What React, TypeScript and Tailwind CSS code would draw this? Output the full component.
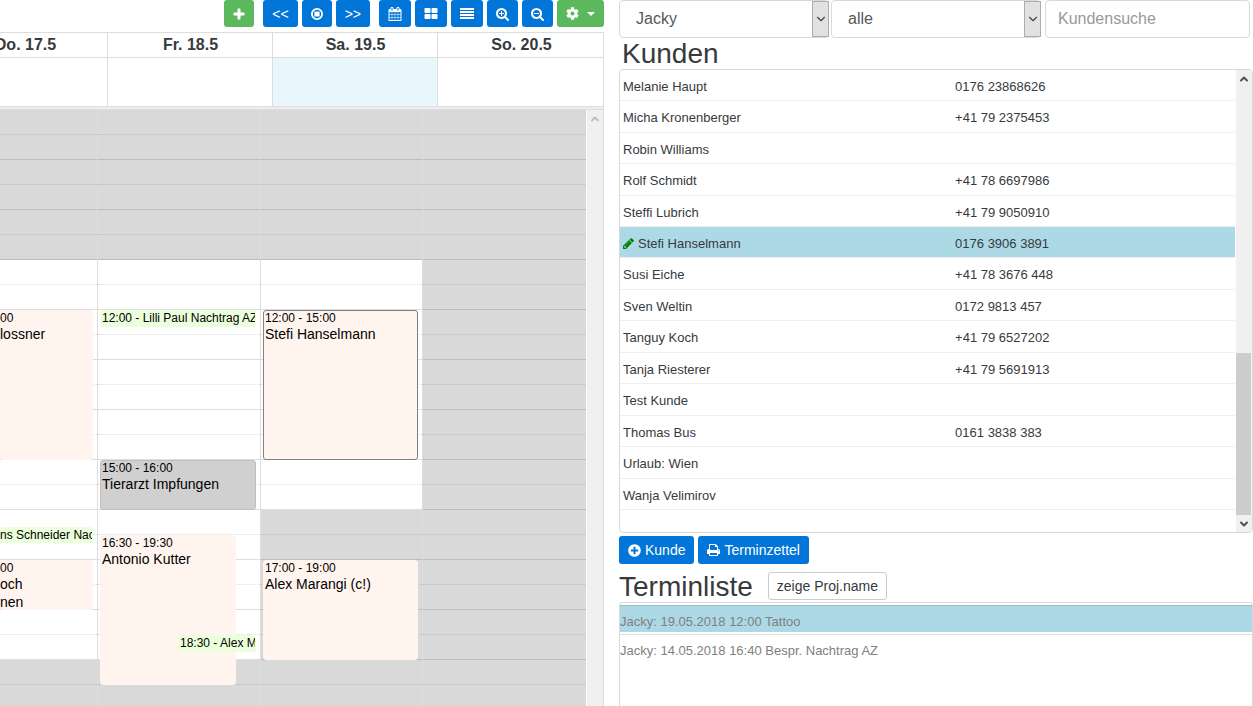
import clsx from "clsx";
import { ChevronDown, ChevronUp } from "lucide-react";
import type { ReactNode } from "react";
import { FaCog, FaPlusCircle } from "react-icons/fa";

type CalendarEvent = {
  start: string;
  end: string;
  time?: string;
  title: string;
  kind: "session" | "note" | "blocked" | "selected";
  place?: string;
};

type Day = {
  label: string;
  today?: boolean;
  // opening hours as half-hour slot indexes, counted from 08:00
  open: [number, number] | null;
  cut?: boolean;
  events: CalendarEvent[];
};

const SLOT_COUNT = 24;
const SLOT_HEIGHT = 25;
const FIRST_HOUR = 8;

const DAYS: Day[] = [
  {
    label: "Do. 17.5",
    open: [6, 22],
    cut: true,
    events: [
      { start: "12:00", end: "15:00", time: "00", title: "lossner", kind: "session" },
      { start: "16:20", end: "16:40", title: "ns Schneider Nachtrag", kind: "note" },
      { start: "17:00", end: "18:00", time: "00", title: "och nen", kind: "session" },
    ],
  },
  {
    label: "Fr. 18.5",
    open: [6, 22],
    events: [
      { start: "12:00", end: "12:20", title: "12:00 - Lilli Paul Nachtrag AZ", kind: "note" },
      { start: "15:00", end: "16:00", time: "15:00 - 16:00", title: "Tierarzt Impfungen", kind: "blocked" },
      {
        start: "16:30",
        end: "19:30",
        time: "16:30 - 19:30",
        title: "Antonio Kutter",
        kind: "session",
        place: "left-0 right-[13%]",
      },
      {
        start: "18:30",
        end: "18:50",
        title: "18:30 - Alex Marangi",
        kind: "note",
        place: "left-1/2 right-0",
      },
    ],
  },
  {
    label: "Sa. 19.5",
    today: true,
    open: [6, 16],
    events: [
      { start: "12:00", end: "15:00", time: "12:00 - 15:00", title: "Stefi Hanselmann", kind: "selected" },
      { start: "17:00", end: "19:00", time: "17:00 - 19:00", title: "Alex Marangi (c!)", kind: "session" },
    ],
  },
  { label: "So. 20.5", open: null, events: [] },
];

const CUSTOMERS = [
  { name: "Melanie Haupt", phone: "0176 23868626" },
  { name: "Micha Kronenberger", phone: "+41 79 2375453" },
  { name: "Robin Williams", phone: "" },
  { name: "Rolf Schmidt", phone: "+41 78 6697986" },
  { name: "Steffi Lubrich", phone: "+41 79 9050910" },
  { name: "Stefi Hanselmann", phone: "0176 3906 3891", selected: true },
  { name: "Susi Eiche", phone: "+41 78 3676 448" },
  { name: "Sven Weltin", phone: "0172 9813 457" },
  { name: "Tanguy Koch", phone: "+41 79 6527202" },
  { name: "Tanja Riesterer", phone: "+41 79 5691913" },
  { name: "Test Kunde", phone: "" },
  { name: "Thomas Bus", phone: "0161 3838 383" },
  { name: "Urlaub: Wien", phone: "" },
  { name: "Wanja Velimirov", phone: "" },
];

const APPOINTMENTS = [
  { text: "Jacky: 19.05.2018 12:00 Tattoo", selected: true },
  { text: "Jacky: 14.05.2018 16:40 Bespr. Nachtrag AZ", selected: false },
];

const LENS =
  "M1216 832q0-185-131.5-316.5t-316.5-131.5-316.5 131.5-131.5 316.5 131.5 316.5 316.5 131.5 316.5-131.5 131.5-316.5zm512 832q0 53-37.5 90.5t-90.5 37.5q-54 0-90-38l-343-342q-179 124-399 124-143 0-273.5-55.5t-225-150-150-225-55.5-273.5 55.5-273.5 150-225 225-150 273.5-55.5 273.5 55.5 225 150 150 225 55.5 273.5q0 220-124 399l343 343q37 37 37 90z";

const ICONS = {
  plus: "M1600 736v192q0 40-28 68t-68 28h-416v416q0 40-28 68t-68 28h-192q-40 0-68-28t-28-68v-416h-416q-40 0-68-28t-28-68v-192q0-40 28-68t68-28h416v-416q0-40 28-68t68-28h192q40 0 68 28t28 68v416h416q40 0 68 28t28 68z",
  calendar:
    "M192 1664h288v-288h-288v288zm352 0h320v-288h-320v288zm-352-352h288v-320h-288v320zm352 0h320v-320h-320v320zm-352-384h288v-288h-288v288zm736 736h320v-288h-320v288zm-384-736h320v-288h-320v288zm768 736h288v-288h-288v288zm-384-352h320v-320h-320v320zm-352-864v-288q0-13-9.5-22.5t-22.5-9.5h-64q-13 0-22.5 9.5t-9.5 22.5v288q0 13 9.5 22.5t22.5 9.5h64q13 0 22.5-9.5t9.5-22.5zm736 864h288v-320h-288v320zm-384-384h320v-288h-320v288zm384 0h288v-288h-288v288zm32-480v-288q0-13-9.5-22.5t-22.5-9.5h-64q-13 0-22.5 9.5t-9.5 22.5v288q0 13 9.5 22.5t22.5 9.5h64q13 0 22.5-9.5t9.5-22.5zm384-64v1280q0 52-38 90t-90 38h-1408q-52 0-90-38t-38-90v-1280q0-52 38-90t90-38h128v-96q0-66 47-113t113-47h64q66 0 113 47t47 113v96h384v-96q0-66 47-113t113-47h64q66 0 113 47t47 113v96h128q52 0 90 38t38 90z",
  blocks:
    "M832 1024v384q0 52-38 90t-90 38h-512q-52 0-90-38t-38-90v-384q0-52 38-90t90-38h512q52 0 90 38t38 90zm0-768v384q0 52-38 90t-90 38h-512q-52 0-90-38t-38-90v-384q0-52 38-90t90-38h512q52 0 90 38t38 90zm896 768v384q0 52-38 90t-90 38h-512q-52 0-90-38t-38-90v-384q0-52 38-90t90-38h512q52 0 90 38t38 90zm0-768v384q0 52-38 90t-90 38h-512q-52 0-90-38t-38-90v-384q0-52 38-90t90-38h512q52 0 90 38t38 90z",
  zoomIn: `M1088 800v64q0 13-9.5 22.5t-22.5 9.5h-224v224q0 13-9.5 22.5t-22.5 9.5h-64q-13 0-22.5-9.5t-9.5-22.5v-224h-224q-13 0-22.5-9.5t-9.5-22.5v-64q0-13 9.5-22.5t22.5-9.5h224v-224q0-13 9.5-22.5t22.5-9.5h64q13 0 22.5 9.5t9.5 22.5v224h224q13 0 22.5 9.5t9.5 22.5z${LENS}`,
  zoomOut: `M1088 800v64q0 13-9.5 22.5t-22.5 9.5h-576q-13 0-22.5-9.5t-9.5-22.5v-64q0-13 9.5-22.5t22.5-9.5h576q13 0 22.5 9.5t9.5 22.5z${LENS}`,
  print:
    "M448 1536h896v-256h-896v256zm0-640h896v-384h-160q-40 0-68-28t-28-68v-160h-640v640zm1152 64q0-26-19-45t-45-19-45 19-19 45 19 45 45 19 45-19 19-45zm128 0v416q0 13-9.5 22.5t-22.5 9.5h-224v160q0 40-28 68t-68 28h-960q-40 0-68-28t-28-68v-160h-224q-13 0-22.5-9.5t-9.5-22.5v-416q0-79 56.5-135.5t135.5-56.5h64v-544q0-40 28-68t68-28h672q40 0 88 20t76 48l152 152q28 28 48 76t20 88v256h64q79 0 135.5 56.5t56.5 135.5z",
  pencil:
    "M491 1536l91-91-235-235-91 91v107h128v128h107zm523-928q0-22-22-22-10 0-17 7l-542 542q-7 7-7 17 0 22 22 22 10 0 17-7l542-542q7-7 7-17zm-54-192l416 416-832 832h-416v-416zm683 96q0 53-37 90l-166 166-416-416 166-165q36-38 90-38 53 0 91 38l235 234q37 39 37 91z",
};

function Icon({
  name,
  viewBox = "64 0 1664 1792",
  className = "h-3.5 w-[13px]",
}: {
  name: keyof typeof ICONS;
  viewBox?: string;
  className?: string;
}) {
  return (
    <svg viewBox={viewBox} className={className} fill="currentColor" aria-hidden="true">
      <path d={ICONS[name]} />
    </svg>
  );
}

function Button({
  label,
  color = "blue",
  className,
  children,
}: {
  label?: string;
  color?: "blue" | "green";
  className?: string;
  children: ReactNode;
}) {
  return (
    <button
      type="button"
      aria-label={label}
      className={clsx(
        "flex items-center rounded-[3px] px-[9px] text-sm text-white",
        color === "blue" ? "bg-[#0275d8]" : "bg-[#5cb85c]",
        className,
      )}
    >
      {children}
    </button>
  );
}

function Toolbar() {
  return (
    <div className="flex h-8 items-start justify-end gap-[9px] *:h-[27px]">
      <Button label="Neuer Termin" color="green">
        <Icon name="plus" viewBox="192 64 1408 1536" className="size-3" />
      </Button>
      <div className="flex gap-1">
        <Button label="Zurück">&lt;&lt;</Button>
        <Button label="Heute">
          <svg viewBox="0 0 12 12" className="size-3" aria-hidden="true">
            <circle cx="6" cy="6" r="5.1" fill="none" stroke="currentColor" strokeWidth="1.8" />
            <rect x="3.4" y="3.4" width="5.2" height="5.2" rx="0.5" fill="currentColor" />
          </svg>
        </Button>
        <Button label="Weiter">&gt;&gt;</Button>
      </div>
      <div className="flex gap-1">
        <Button label="Monat">
          <Icon name="calendar" className="size-3.5" />
        </Button>
        <Button label="Woche">
          <Icon name="blocks" className="size-3.5" />
        </Button>
        <Button label="Liste">
          <svg viewBox="0 0 14 14" className="size-3.5" fill="currentColor" aria-hidden="true">
            <path d="M0 1h14v2H0zM0 4h14v2H0zM0 7h14v2H0zM0 10h14v2H0z" />
          </svg>
        </Button>
        <Button label="Vergrößern">
          <Icon name="zoomIn" />
        </Button>
        <Button label="Verkleinern">
          <Icon name="zoomOut" />
        </Button>
        <Button label="Einstellungen" color="green" className="gap-2">
          <FaCog className="size-[13px]" />
          <svg viewBox="0 0 8 4" className="h-1 w-2" fill="currentColor" aria-hidden="true">
            <path d="M0 0h8L4 4z" />
          </svg>
        </Button>
      </div>
    </div>
  );
}

function toPixels(time: string) {
  const [hours, minutes] = time.split(":").map(Number);
  return Math.round((((hours - FIRST_HOUR) * 60 + minutes) / 30) * SLOT_HEIGHT);
}

function EventBox({ event, cut }: { event: CalendarEvent; cut?: boolean }) {
  const top = toPixels(event.start);
  const isNote = event.kind === "note";

  return (
    <div
      className={clsx(
        "absolute overflow-hidden rounded-[3px] border",
        event.place ?? "inset-x-0",
        cut ? "border-l-0" : "pl-px",
        isNote && "border-[#ecffdc] bg-[#ecffdc]",
        event.kind === "session" && "border-[#fff5ee] bg-[#fff5ee]",
        event.kind === "selected" && "border-[#808080] bg-[#fff5ee]",
        event.kind === "blocked" && "border-[#bfbfbf] bg-[#d0d0d0]",
      )}
      style={{ top, height: toPixels(event.end) - top }}
    >
      {event.time && <div className="text-xs leading-[14px]">{event.time}</div>}
      <div
        className={clsx(
          isNote ? "text-xs leading-[15px] whitespace-nowrap" : "text-sm leading-[18px]",
          cut && !isNote && "max-w-12",
        )}
      >
        {event.title}
      </div>
    </div>
  );
}

function DayColumn({ day }: { day: Day }) {
  return (
    <div className="relative border-r border-[#dddddd] last:border-r-0">
      {Array.from({ length: SLOT_COUNT }, (_, slot) => {
        const isOpen = day.open !== null && slot >= day.open[0] && slot < day.open[1];
        return (
          <div
            key={slot}
            className={clsx(
              "h-[25px] border-b",
              slot % 2 === 0 && "border-dotted",
              isOpen ? "border-[#dddddd] bg-white" : "border-[#bcbcbc] bg-[#d9d9d9]",
            )}
          />
        );
      })}
      <div className={clsx("absolute inset-y-0 right-1", day.cut ? "left-0" : "left-0.5")}>
        {day.events.map((event) => (
          <EventBox key={event.start} event={event} cut={day.cut} />
        ))}
      </div>
    </div>
  );
}

function Calendar() {
  return (
    <section className="flex min-h-0 min-w-0 flex-col overflow-hidden">
      <Toolbar />
      <div className="flex min-h-0 flex-1 flex-col border-t border-r border-[#dddddd]">
        <div className="grid grid-cols-[108fr_165fr_165fr_165fr]">
          {DAYS.map((day) => (
            <div
              key={day.label}
              className="flex min-w-0 flex-col border-r border-[#dddddd] last:border-r-0"
            >
              <div className="flex justify-end overflow-hidden border-b border-[#dddddd]">
                <h3 className="w-[163px] shrink-0 text-center leading-6 font-bold">{day.label}</h3>
              </div>
              <div className={clsx("h-12", day.today && "bg-[#e9f6fc]")} />
            </div>
          ))}
        </div>
        <div className="h-1 shrink-0 border-y border-[#dddddd] bg-[#eeeeee]" />
        <div className="flex min-h-0 flex-1 overflow-hidden text-black">
          <div className="grid flex-1 grid-cols-[98fr_163fr_162fr_163fr]">
            {DAYS.map((day) => (
              <DayColumn key={day.label} day={day} />
            ))}
          </div>
          <div className="flex w-[17px] flex-col items-center border-l border-white bg-[#f0f0f0] pt-[3px] text-[#bfbfbf]">
            <ChevronUp className="size-3" strokeWidth={4} />
          </div>
        </div>
      </div>
    </section>
  );
}

function Select({ label, value }: { label: string; value: string }) {
  return (
    <div className="relative">
      <select
        aria-label={label}
        defaultValue={value}
        className="h-[38px] w-full appearance-none rounded-[4px] border border-[#d9d9d9] bg-white pl-4 text-[#55595c]"
      >
        <option>{value}</option>
      </select>
      <span className="pointer-events-none absolute inset-y-px right-0 flex w-[17px] items-center justify-center border border-[#adadad] bg-[#e1e1e1] text-[#444444]">
        <ChevronDown className="size-3.5" />
      </span>
    </div>
  );
}

function CustomerList() {
  return (
    <div className="flex h-[464px] overflow-hidden rounded-[4px] border border-[#d9d9d9]">
      <div className="mr-px flex-1">
        <table className="h-[440px] w-full table-fixed text-[13px]">
          <tbody>
            {CUSTOMERS.map((customer) => (
              <tr
                key={customer.name}
                className={clsx("border-b border-[#eceeef]", customer.selected && "bg-[#add8e6]")}
              >
                <td className="w-[54%] pt-[3px] pl-[3px]">
                  <span className="flex items-center gap-1">
                    {customer.selected && (
                      <span className="text-[#008000]">
                        <Icon name="pencil" viewBox="128 128 1536 1536" className="size-[11px]" />
                      </span>
                    )}
                    {customer.name}
                  </span>
                </td>
                <td className="pt-[3px] pl-[3px]">{customer.phone}</td>
              </tr>
            ))}
          </tbody>
        </table>
      </div>
      <div className="flex w-4 flex-col bg-[#f0f0f0] text-[#505050]">
        <span className="flex h-[17px] items-center justify-center">
          <ChevronUp className="size-3" strokeWidth={4} />
        </span>
        <span className="flex-1" />
        <span className="mr-px h-[162px] bg-[#cdcdcd]" />
        <span className="flex h-[17px] items-center justify-center">
          <ChevronDown className="size-3" strokeWidth={4} />
        </span>
      </div>
    </div>
  );
}

export default function App() {
  return (
    <main className="grid h-screen grid-cols-[604fr_649fr] grid-rows-1 overflow-hidden bg-white font-['Liberation_Sans',Arial,sans-serif] text-base text-[#373a3c]">
      <Calendar />

      <section className="flex min-h-0 min-w-0 flex-col pl-[15px]">
        <div className="grid grid-cols-[210fr_210fr_207fr] gap-0.5 pr-[3px]">
          <Select label="Mitarbeiter" value="Jacky" />
          <Select label="Filter" value="alle" />
          <input
            type="search"
            aria-label="Kundensuche"
            placeholder="Kundensuche"
            className="ml-0.5 h-[38px] min-w-0 rounded-[4px] border border-[#d9d9d9] px-3 placeholder:text-[#999999]"
          />
        </div>

        <h2 className="pl-[3px] text-[28px] leading-[31px]">Kunden</h2>
        <CustomerList />

        <div className="mt-[3px] flex gap-1 *:h-7">
          <Button className="gap-1">
            <FaPlusCircle className="size-[13px]" />
            Kunde
          </Button>
          <Button className="gap-1">
            <Icon name="print" />
            Terminzettel
          </Button>
        </div>

        <div className="mt-1.5 flex h-8 items-center gap-[15px]">
          <h2 className="text-[28px] leading-[31px]">Terminliste</h2>
          <button type="button" className="h-7 rounded-[3px] border border-[#cccccc] px-2 text-sm">
            zeige Proj.name
          </button>
        </div>
        <ul className="flex-1 rounded-t-[4px] border border-b-0 border-[#d9d9d9] pt-0.5 text-[13px] text-[#808080]">
          {APPOINTMENTS.map((appointment) => (
            <li
              key={appointment.text}
              className={clsx(
                "mb-0.5 border-t pt-[5px] leading-[21px]",
                appointment.selected ? "border-[#98bec9] bg-[#add8e6]" : "border-[#dddddd]",
              )}
            >
              {appointment.text}
            </li>
          ))}
        </ul>
      </section>
    </main>
  );
}
